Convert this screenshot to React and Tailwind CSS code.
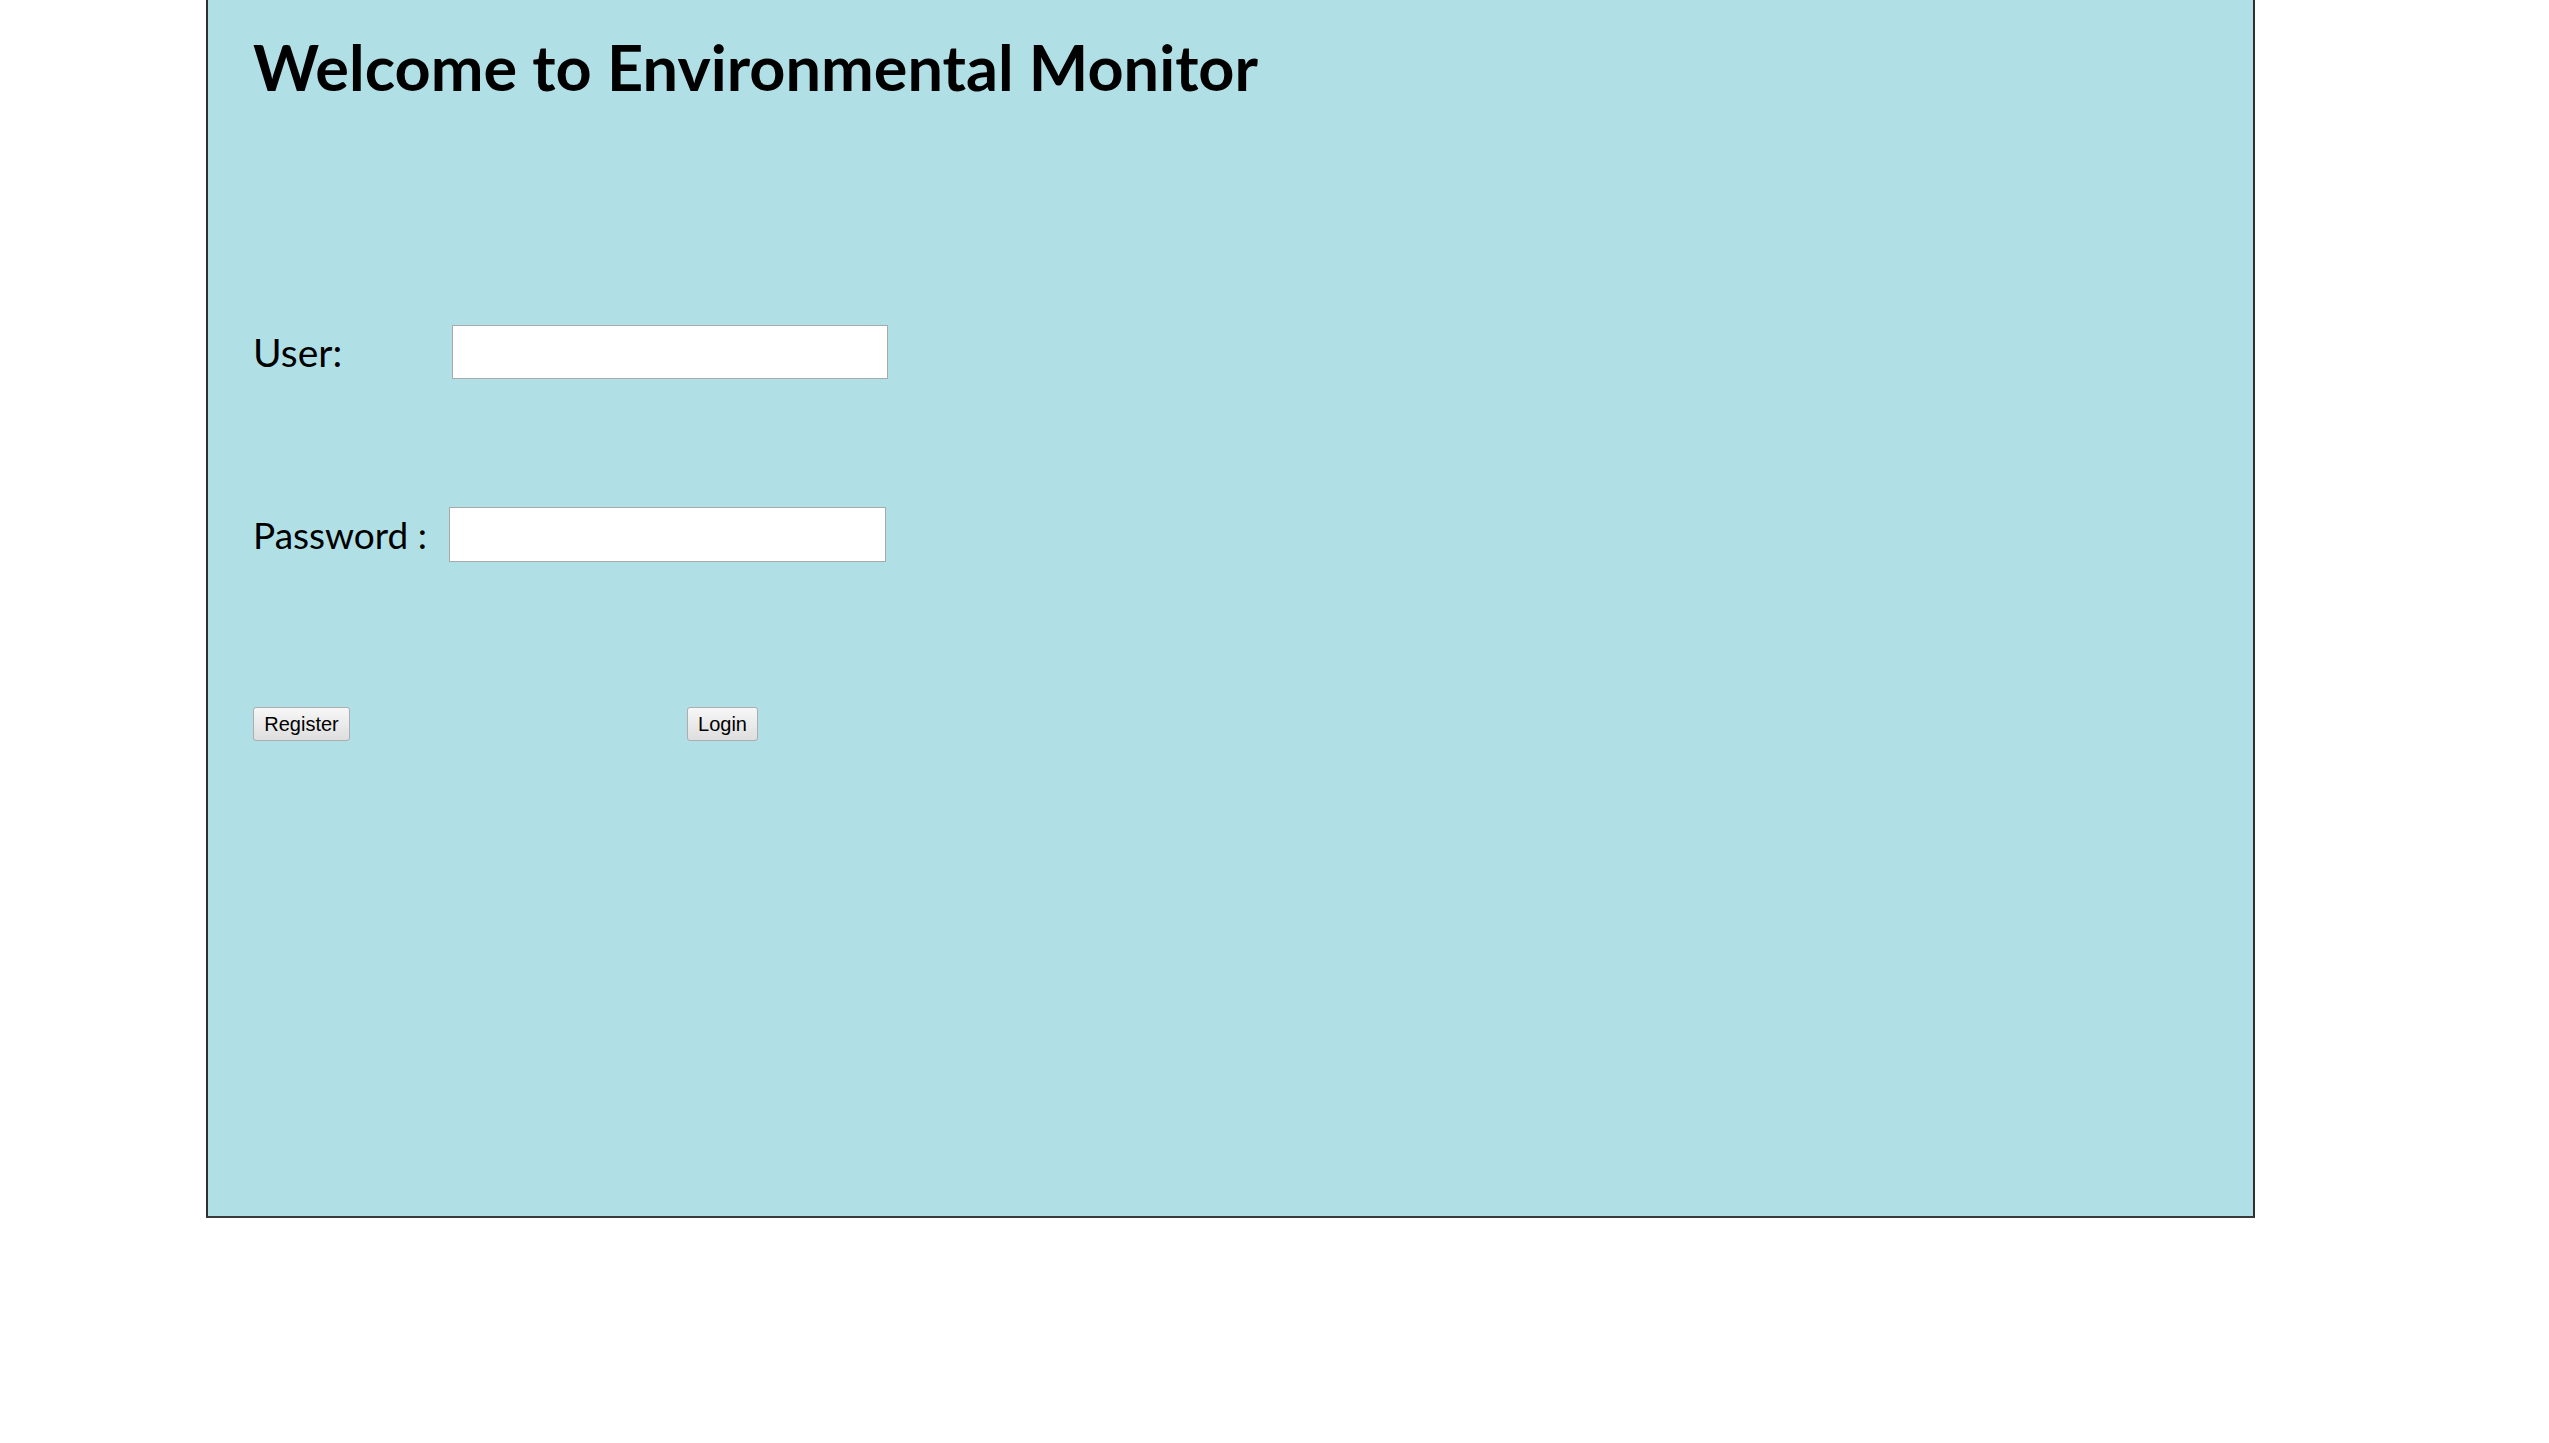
import { useState } from 'react';

export default function App() {
  const [user, setUser] = useState('');
  const [password, setPassword] = useState('');

  const labelFont = "font-['Comic_Sans_MS','Lato',sans-serif]";
  const buttonClass =
    "h-[34px] rounded-[3px] border border-[#adadad] bg-gradient-to-b from-[#f7f7f7] to-[#dedede] font-['Liberation_Sans',Arial,sans-serif] text-[20px] text-black leading-none";

  return (
    <div className="min-h-screen bg-white">
      <div className="ml-[206px] h-[1218px] w-[2049px] border-x-2 border-b-2 border-x-[#2f2f2f] border-b-[#3a3a3a] bg-[#b0e0e6] pl-[45px]">
        {/* heading */}
        <h1 className={`${labelFont} pt-[35px] text-[63px] font-bold leading-none text-black`}>
          Welcome to Environmental Monitor
        </h1>

        {/* login form */}
        <div className="mt-[227px] flex h-[54px] items-center">
          <label className={`${labelFont} w-[199px] text-[39px] leading-none text-black`}>User:</label>
          <input
            type="text"
            value={user}
            onChange={(e) => setUser(e.target.value)}
            className="h-[54px] w-[436px] border border-[#a9a9a9] bg-white px-2 outline-none"
          />
        </div>

        <div className="mt-[128px] flex h-[55px] items-center">
          <label className={`${labelFont} w-[196px] text-[37px] leading-none text-black`}>Password :</label>
          <input
            type="password"
            value={password}
            onChange={(e) => setPassword(e.target.value)}
            className="h-[55px] w-[437px] border border-[#a9a9a9] bg-white px-2 outline-none"
          />
        </div>

        <div className="mt-[145px] flex items-center">
          <button className={`${buttonClass} w-[97px]`}>Register</button>
          <button className={`${buttonClass} ml-[337px] w-[71px]`}>Login</button>
        </div>
      </div>
    </div>
  );
}
